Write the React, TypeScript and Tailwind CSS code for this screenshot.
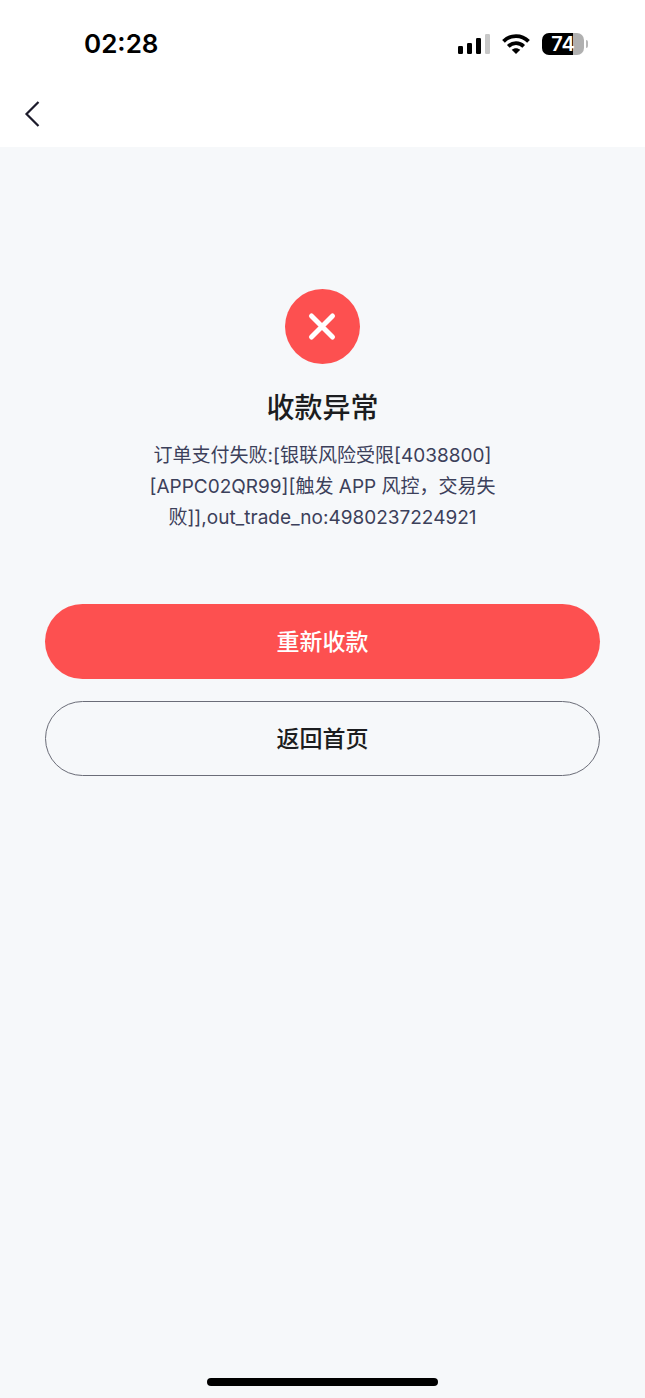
import React from 'react';

const errorLines = [
  '订单支付失败:[银联风险受限[4038800]',
  '[APPC02QR99][触发 APP 风控，交易失',
  '败]],out_trade_no:4980237224921',
];

function StatusBar() {
  return (
    <div className="flex h-[88px] items-center justify-between pl-[84px] pr-[57px]">
      <span className="text-[26px] leading-8 font-semibold text-black">02:28</span>
      <div className="flex items-center gap-3">
        {/* 信號強度 */}
        <svg className="h-[22px] w-[32px]" viewBox="0 0 32 22" aria-hidden="true">
          <rect x="0" y="13" width="5" height="8" rx="1.2" fill="#000" />
          <rect x="9" y="10" width="5" height="11" rx="1.2" fill="#000" />
          <rect x="18" y="5" width="5" height="16" rx="1.2" fill="#000" />
          <rect x="27" y="1" width="5" height="20" rx="1.2" fill="#c8c8c8" />
        </svg>
        {/* Wi-Fi */}
        <svg className="h-[22px] w-[28px]" viewBox="0 0 28 22" fill="none" stroke="#000" strokeWidth="3.8" aria-hidden="true">
          <path d="M1.5 8.3C8.4 1.3 19.6 1.3 26.5 8.3" />
          <path d="M6.3 13.3C10.6 9.1 17.4 9.1 21.7 13.3" />
          <path d="M14 21L9.7 16.8C12.2 14.7 15.8 14.7 18.3 16.8Z" fill="#000" stroke="none" />
        </svg>
        {/* 電量 */}
        <div className="flex items-center gap-0.5">
          <div className="flex h-[22px] w-[42px] items-center justify-center rounded-[7px] bg-linear-to-r from-black from-74% to-[#b0b0b0] to-74%">
            <span className="text-[20px] leading-[22px] font-semibold text-white">74</span>
          </div>
          <div className="h-2 w-0.5 rounded-r-full bg-[#b8b8b8]" />
        </div>
      </div>
    </div>
  );
}

export default function App() {
  return (
    <div className="flex min-h-screen flex-col bg-[#f6f8fa] font-['Inter','Noto_Sans_CJK_SC',sans-serif]">
      <header className="bg-white">
        <StatusBar />
        <nav className="flex h-[59px] items-start px-5 pt-3">
          <button type="button" aria-label="返回" className="flex h-7 w-6 items-center justify-center">
            <svg className="h-7 w-6" viewBox="0 0 24 28" fill="none" stroke="#1c1b2b" strokeWidth="2.2" aria-hidden="true">
              <path d="M18.5 2L6.5 14L18.5 26" />
            </svg>
          </button>
        </nav>
      </header>

      <main className="flex flex-1 flex-col items-center px-[45px] pt-[142px]">
        <svg className="h-[75px] w-[75px]" viewBox="0 0 75 75" aria-hidden="true">
          <circle cx="37.5" cy="37.5" r="37.5" fill="#fd5050" />
          <path d="M26.5 27L47.5 48M47.5 27L26.5 48" stroke="#fff" strokeWidth="5" strokeLinecap="round" />
        </svg>

        <h1 className="mt-6 text-[28px] leading-10 font-medium text-[#1c1d20]">收款异常</h1>
        <p className="mt-3 text-center text-[19px] leading-[31px] text-[#3c405a]">
          {errorLines.map((line) => (
            <span key={line} className="block">{line}</span>
          ))}
        </p>

        <div className="mt-[71px] flex w-full flex-col gap-[22px]">
          <button type="button" className="h-[75px] w-full rounded-full bg-[#fd5050] text-[23px] leading-8 font-medium text-white">
            重新收款
          </button>
          <button type="button" className="h-[75px] w-full rounded-full border border-[#6b6d78] text-[23px] leading-8 font-medium text-[#1c1d20]">
            返回首页
          </button>
        </div>
      </main>

      {/* 底部指示條 */}
      <footer className="flex justify-center pb-3">
        <div className="h-2 w-[231px] rounded-full bg-black" />
      </footer>
    </div>
  );
}
